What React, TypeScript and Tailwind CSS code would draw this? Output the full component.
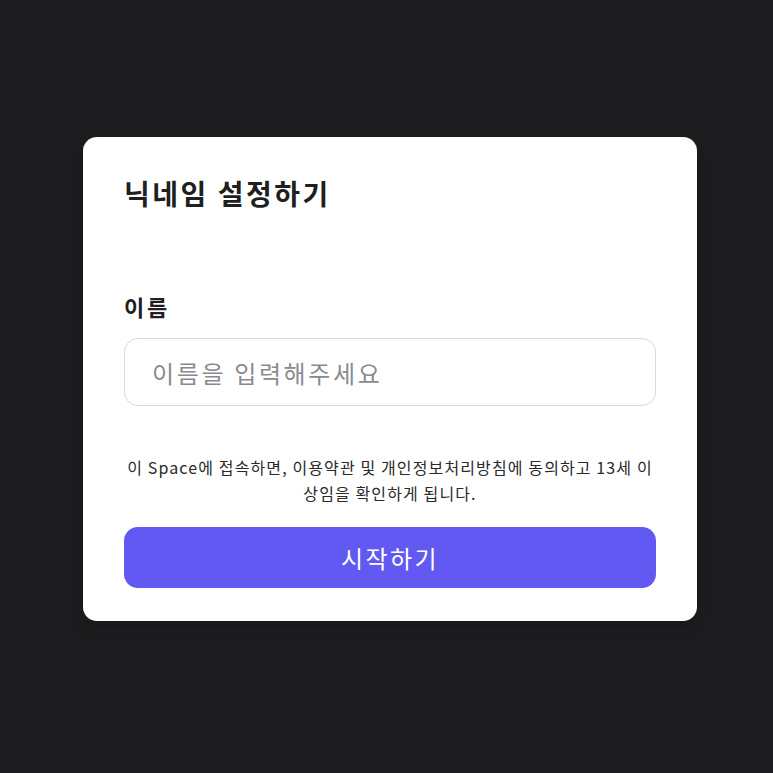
export default function App() {
  return (
    <div
      className="min-h-[773px] bg-[#1c1c1e] pt-[137px] pl-[83px]"
      style={{ fontFamily: '"Noto Sans CJK KR", "Noto Sans", sans-serif' }}
    >
      <div className="w-[614px] rounded-[14px] bg-white px-[41px] pt-[38px] pb-[33px] shadow-lg">
        <h1 className="text-[28px] leading-[36px] font-semibold tracking-[0.09em] text-[#1f1f1f]">닉네임 설정하기</h1>

        <label className="mt-[80px] block text-[22px] leading-[30px] font-semibold tracking-[0.12em] text-[#1f1f1f]">
          이름
        </label>
        <input
          type="text"
          placeholder="이름을 입력해주세요"
          className="mt-[17px] h-[68px] w-full rounded-[14px] border border-[#d9d9de] px-[27px] text-[24px] tracking-[0.11em] text-[#1f1f1f] outline-none placeholder:text-[#8a8a8e]"
        />

        <p className="mt-[48px] text-center text-[16px] leading-[26px] tracking-[0.07em] break-all text-[#2a2a2a]">
          이 Space에 접속하면, 이용약관 및 개인정보처리방침에 동의하고 13세 이상임을 확인하게 됩니다.
        </p>

        <button className="mt-[21px] h-[61px] w-full rounded-[14px] bg-[#6159f1] text-[24px] tracking-[0.1em] text-white">
          시작하기
        </button>
      </div>
    </div>
  );
}
